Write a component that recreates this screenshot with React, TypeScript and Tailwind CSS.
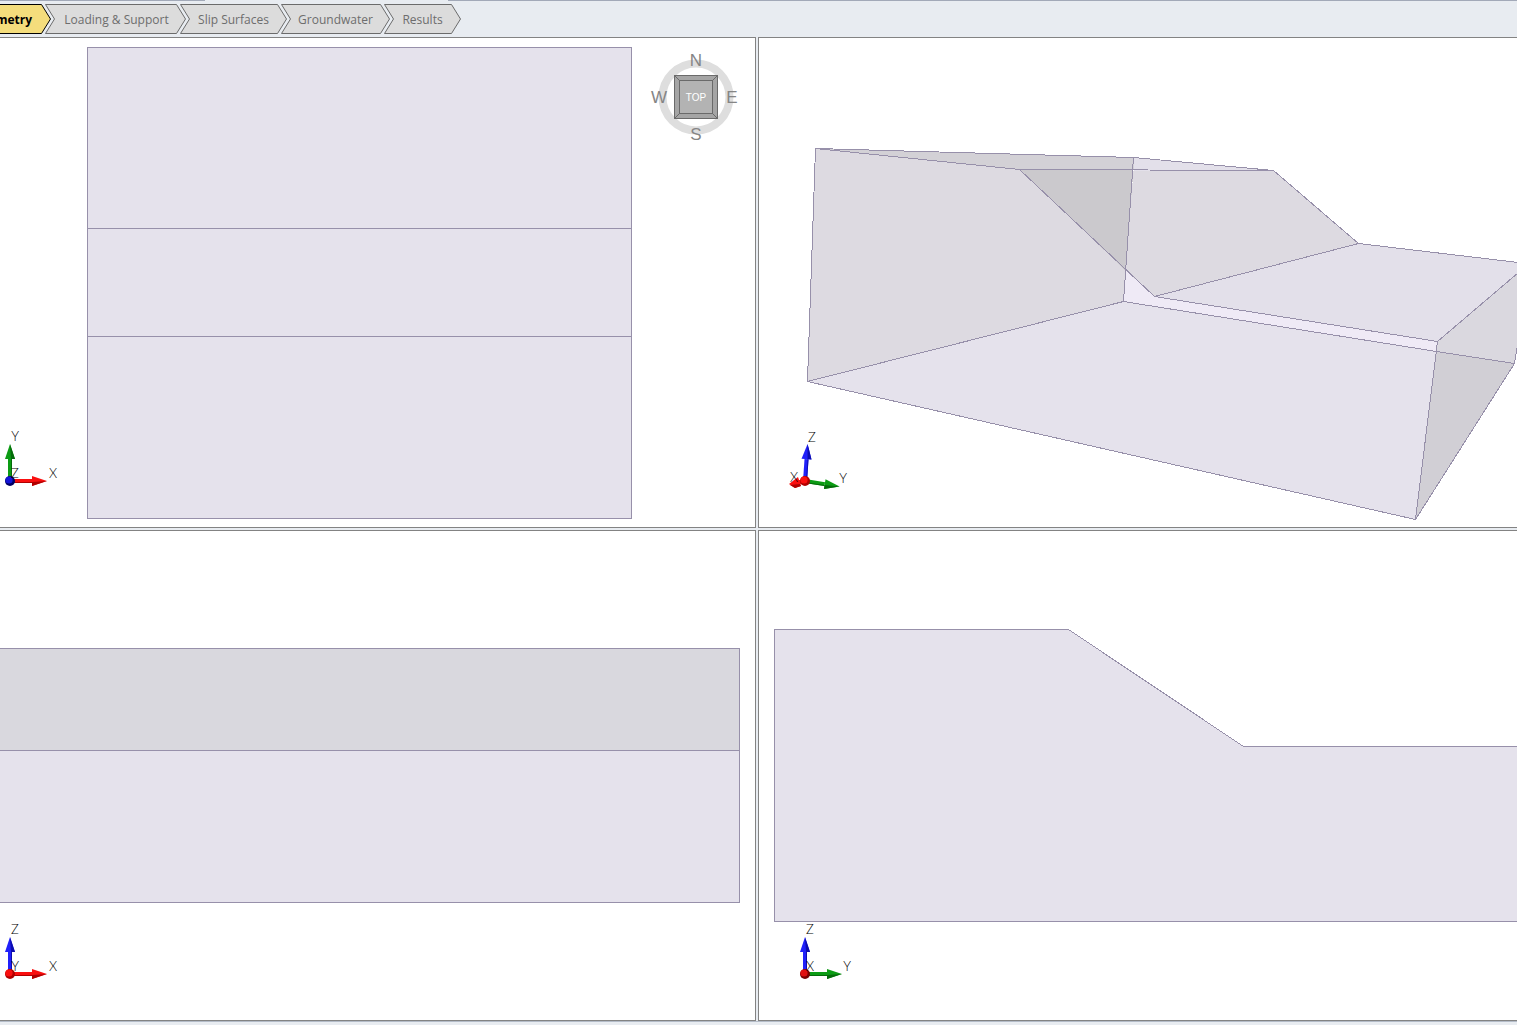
import { useState } from "react";

interface Tab {
  title: string;
  width: number;
  style: string;
}

interface ArrowProps {
  x: number;
  y: number;
  angle: number;
  length?: number;
  color: string;
  dark: string;
}

const tabs: Tab[] = [
  { title: "metry", width: 51, style: "w-[51px] pr-[19px] justify-end" },
  { title: "Loading & Support", width: 141, style: "w-[141px] -ml-1.5 pl-0.5 justify-center" },
  { title: "Slip Surfaces", width: 107, style: "w-[107px] -ml-1.5 justify-center" },
  { title: "Groundwater", width: 109, style: "w-[109px] -ml-1.5 justify-center" },
  { title: "Results", width: 77, style: "w-[77px] -ml-1.5 justify-center" },
];

const RED = { color: "#fa0f0f", dark: "#b00000" };
const GREEN = { color: "#0c9c14", dark: "#056b0a" };
const BLUE = { color: "#2020fa", dark: "#0c0cae" };

const EDGE = "#9790aa";
const SOIL = "#e5e2ec";

function Arrow({ x, y, angle, length = 37, color, dark }: ArrowProps) {
  const base = length - 15;
  return (
    <g transform={`translate(${x} ${y}) rotate(${angle})`}>
      <rect x="0" y="-2" width={base} height="4" fill={color} />
      <rect x="0" y="1" width={base} height="1" fill={dark} />
      <polygon points={`${base},-5 ${length},0 ${base},5`} fill={color} />
      <polygon points={`${base},1 ${length},0 ${base},5`} fill={dark} />
    </g>
  );
}

function Ball({ x, y, color, dark }: { x: number; y: number; color: string; dark: string }) {
  return (
    <g>
      <circle cx={x} cy={y} r="5" fill={dark} />
      <circle cx={x - 1} cy={y - 1} r="3.6" fill={color} />
    </g>
  );
}

function AxisLabel({ x, y, children }: { x: number; y: number; children: string }) {
  return (
    <text x={x} y={y} textAnchor="middle" className="fill-black font-['Lato',sans-serif] text-[13px] font-light">
      {children}
    </text>
  );
}

function Compass() {
  return (
    <g className="font-['Liberation_Sans'] text-[17px]">
      <circle cx="696" cy="97" r="33.5" fill="none" stroke="#dedede" strokeWidth="8" />
      <g fill="#858585" textAnchor="middle">
        <text x="696" y="66">N</text>
        <text x="696" y="140">S</text>
        <text x="659" y="103">W</text>
        <text x="732" y="103">E</text>
      </g>
      <g stroke="#6a6a6a" strokeWidth="1">
        <rect x="674.5" y="75.5" width="43" height="43" fill="#a5a5a5" />
        <path d="M674.5 75.5L717.5 118.5M717.5 75.5L674.5 118.5" />
        <rect x="679.5" y="80.5" width="33" height="33" fill="#b3b3b3" />
      </g>
      <text x="696" y="101" textAnchor="middle" className="fill-white text-[10px]">TOP</text>
    </g>
  );
}

function TopView() {
  return (
    <svg viewBox="0 38 755 489" preserveAspectRatio="xMinYMin slice" className="block h-full w-full">
      <g fill={SOIL} stroke={EDGE}>
        <rect x="87.5" y="47.5" width="544" height="471" />
        <path d="M87.5 228.5H631.5M87.5 336.5H631.5" />
      </g>
      <Compass />
      <Arrow x={10} y={481} angle={-90} {...GREEN} />
      <Arrow x={10} y={481} angle={0} {...RED} />
      <Ball x={10} y={481} color="#1414d8" dark="#000064" />
      <AxisLabel x={15} y={441}>Y</AxisLabel>
      <AxisLabel x={15} y={478}>Z</AxisLabel>
      <AxisLabel x={53} y={478}>X</AxisLabel>
    </svg>
  );
}

function PerspectiveView() {
  return (
    <svg viewBox="759 38 758 489" preserveAspectRatio="xMinYMin slice" className="block h-full w-full">
      <g shapeRendering="crispEdges" transform="translate(0.5 0.5)">
        <polygon points="807,381 1123,301 1436,351 1415,519" fill={SOIL} />
        <polygon points="815,148 1019,169 1125,270 1123,301 807,381" fill="#dddae1" />
        <polygon points="815,148 1133,157 1133,169 1019,169" fill="#d3d1d6" />
        <polygon points="1133,157 1273,170 1133,170" fill="#e3e0ea" />
        <polygon points="1019,169 1133,169 1125,270" fill="#cbc9cd" />
        <polygon points="1133,170 1273,170 1358,243 1154,296 1125,270" fill="#dddae1" />
        <polygon points="1125,270 1154,296 1437,341 1436,351 1123,301" fill="#efeaf6" />
        <polygon points="1154,296 1358,243 1518,262 1518,272 1437,341" fill="#e3e0ea" />
        <polygon points="1437,341 1518,272 1517,345 1514,363 1436,351" fill="#dad8df" />
        <polygon points="1436,351 1514,363 1415,519" fill="#d1cfd5" />
        <path
          d="M815 148L1133 157L1273 170L1358 243L1518 262M815 148L1019 169L1273 170M1019 169L1154 296L1358 243M1154 296L1437 341L1518 272M815 148L807 381L1123 301L1133 157M1123 301L1436 351L1514 363L1517 345M807 381L1415 519L1437 341M1415 519L1514 363"
          fill="none"
          stroke={EDGE}
        />
      </g>
      <Arrow x={805} y={481} angle={-86} {...BLUE} />
      <Arrow x={805} y={481} angle={9} length={35} {...GREEN} />
      <rect x="796" y="480" width="9" height="4" fill={RED.color} />
      <polygon points="789,484 798,477 801,486 795,488" fill={RED.color} />
      <polygon points="790,485 800,484 801,486 795,488" fill={RED.dark} />
      <Ball x={805} y={481} {...RED} />
      <AxisLabel x={812} y={442}>Z</AxisLabel>
      <AxisLabel x={843} y={483}>Y</AxisLabel>
      <AxisLabel x={794} y={482}>X</AxisLabel>
    </svg>
  );
}

function FrontView() {
  return (
    <svg viewBox="0 531 755 489" preserveAspectRatio="xMinYMin slice" className="block h-full w-full">
      <g stroke={EDGE}>
        <rect x="-5.5" y="648.5" width="745" height="102" fill="#d9d8de" />
        <rect x="-5.5" y="750.5" width="745" height="152" fill={SOIL} />
      </g>
      <Arrow x={10} y={974} angle={-90} {...BLUE} />
      <Arrow x={10} y={974} angle={0} {...RED} />
      <Ball x={10} y={974} {...RED} />
      <AxisLabel x={15} y={934}>Z</AxisLabel>
      <AxisLabel x={15} y={971}>Y</AxisLabel>
      <AxisLabel x={53} y={971}>X</AxisLabel>
    </svg>
  );
}

function SideView() {
  return (
    <svg viewBox="759 531 758 489" preserveAspectRatio="xMinYMin slice" className="block h-full w-full">
      <polygon
        points="774.5,629.5 1068.5,629.5 1243.5,746.5 1525.5,746.5 1525.5,921.5 774.5,921.5"
        fill={SOIL}
        stroke={EDGE}
        shapeRendering="crispEdges"
      />
      <Arrow x={805} y={974} angle={-90} {...BLUE} />
      <Arrow x={805} y={974} angle={0} {...GREEN} />
      <Ball x={805} y={974} color="#e01010" dark="#780000" />
      <AxisLabel x={810} y={934}>Z</AxisLabel>
      <AxisLabel x={810} y={971}>X</AxisLabel>
      <AxisLabel x={847} y={971}>Y</AxisLabel>
    </svg>
  );
}

function App() {
  const [active, setActive] = useState("metry");

  const outline = (w: number, first: boolean) =>
    first
      ? `-5,0.5 ${w - 9.5},0.5 ${w - 0.5},15 ${w - 9.5},29.5 -5,29.5`
      : `0.5,0.5 ${w - 9.5},0.5 ${w - 0.5},15 ${w - 9.5},29.5 0.5,29.5 9.5,15`;

  return (
    <div className="flex h-screen flex-col overflow-hidden bg-[#e8ecf1] font-['Open_Sans',sans-serif]">
      <header className="shrink-0 pb-[3px]">
        <div className="flex h-px">
          <div className="w-[205px] bg-[#a2a9b8]"></div>
          <div className="ml-[243px] flex-1 bg-[#a2a9b8]"></div>
        </div>
        <nav className="flex pt-[3px]">
          {tabs.map((tab, i) => (
            <button
              key={tab.title}
              onClick={() => setActive(tab.title)}
              className={`${tab.style} relative flex h-[30px] shrink-0 items-center whitespace-nowrap pt-0.5 text-[12px] ${
                active === tab.title ? "font-bold text-black" : "text-[#6d6d6d]"
              }`}
            >
              <svg className="absolute inset-0 h-full w-full">
                <polygon
                  points={outline(tab.width, i === 0)}
                  fill={active === tab.title ? "#f4dd7c" : "#dcdcdc"}
                  stroke={active === tab.title ? "#000000" : "#6b6b6b"}
                />
              </svg>
              <span className="relative">{tab.title}</span>
            </button>
          ))}
        </nav>
      </header>

      <main className="grid min-h-0 flex-1 grid-cols-[756fr_759fr] grid-rows-2 gap-0.5">
        <section className="min-h-0 min-w-0 border-y border-r border-[#838383] bg-white">
          <TopView />
        </section>
        <section className="min-h-0 min-w-0 border-y border-l border-[#838383] bg-white">
          <PerspectiveView />
        </section>
        <section className="min-h-0 min-w-0 border-y border-r border-[#838383] bg-white">
          <FrontView />
        </section>
        <section className="min-h-0 min-w-0 border-y border-l border-[#838383] bg-white">
          <SideView />
        </section>
      </main>

      <footer className="h-1 shrink-0 border-t border-[#b4bcc8]"></footer>
    </div>
  );
}

export default App;
